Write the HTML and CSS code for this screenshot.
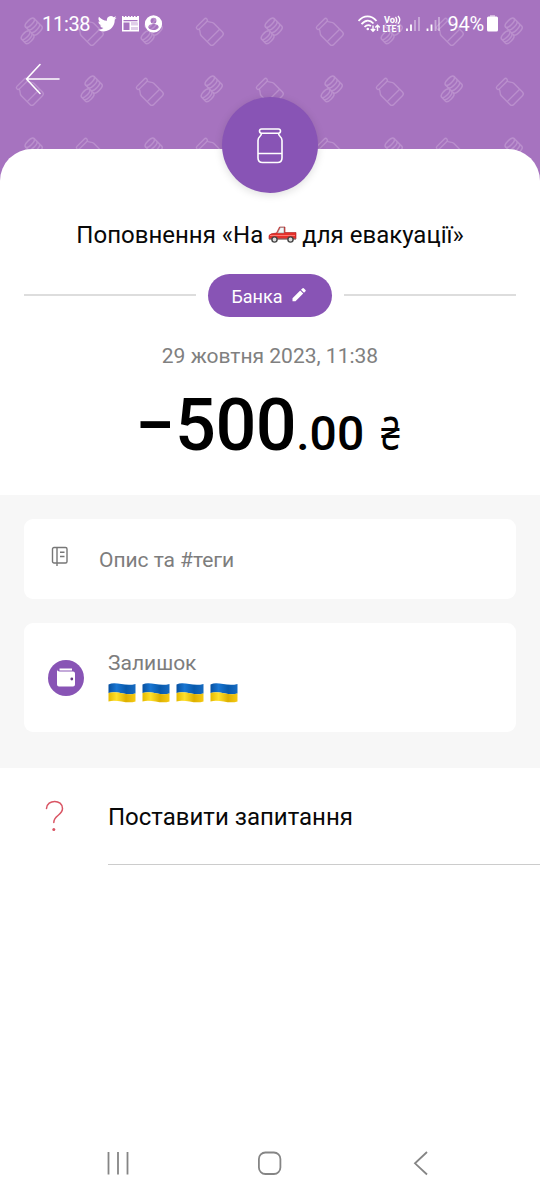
FILE: index.html
```html
<!DOCTYPE html>
<html lang="uk">
<head>
<meta charset="utf-8">
<title>Банка</title>
<link rel="stylesheet" href="styles.css">
</head>
<body>
<div class="screen">
  <header class="header">
    <svg class="header-pattern" width="540" height="190" fill="none" stroke="#ba8fcd" stroke-width="1.5" stroke-linejoin="round" stroke-linecap="round">
      <defs>
        <g id="jar" transform="rotate(-45) scale(.88)">
          <rect x="-8" y="-15" width="16" height="4" rx="2"/>
          <path d="M-6.500-11C-6.500-8-10-7.500-10-4V10Q-10 13-7 13H7Q10 13 10 10V-4C10-7.500 6.500-8 6.500-11M-10 5.500H10"/>
        </g>
        <g id="coins" transform="rotate(-45)">
          <ellipse cx="5" cy="-6" rx="6" ry="2.500"/>
          <path d="M-1-6V5C-1 8.300 11 8.300 11 5V-6M-1-2.300C-1 1 11 1 11-2.300M-1 1.400C-1 4.700 11 4.700 11 1.400"/>
          <path d="M-1.500-1C-4-3.500-12.500-3-12.500 0V5.500C-12.500 8.800-1.500 8.800-1 5.500M-12.500 0C-12.500 2.800-2.500 3-1.500 .5M-12.500 2.800C-12.500 6-2 6-1.200 3"/>
        </g>
        <pattern id="tile" width="120" height="120" patternUnits="userSpaceOnUse">
          <use href="#coins" x="30.500" y="30.500"/><use href="#jar" x="90" y="32"/>
          <use href="#jar" x="30" y="92"/><use href="#coins" x="90.500" y="88.500"/>
        </pattern>
      </defs>
      <rect width="540" height="190" fill="url(#tile)" stroke="none"/>
    </svg>
    <div class="status">
      <span class="clock">11:38</span>
      <svg class="notices" width="68" height="20" viewBox="0 0 68 20" fill="#fff">
        <path transform="translate(-.3 .2) scale(.79)" d="M23.950 4.570a10 10 0 0 1-2.820.77 4.960 4.960 0 0 0 2.160-2.720c-.95.55-2 .96-3.130 1.180a4.920 4.920 0 0 0-8.380 4.480C7.690 8.090 4.070 6.130 1.640 3.160a4.820 4.820 0 0 0-.67 2.480c0 1.710.87 3.210 2.190 4.100a4.900 4.900 0 0 1-2.230-.62v.06a4.920 4.920 0 0 0 3.950 4.830 5 5 0 0 1-2.210.08 4.940 4.940 0 0 0 4.600 3.420A9.870 9.870 0 0 1 0 19.540a13.990 13.990 0 0 0 7.550 2.210c9.050 0 14-7.500 14-13.990 0-.21 0-.42-.02-.63a9.940 9.940 0 0 0 2.460-2.550z"/>
        <path fill-rule="evenodd" d="M24 2H25.500v1h1.500V2h1.500v1H30V2h1.500v1H33V2h1.500v1H36V2h1.500v1H39V2h2v15.500H24zM25.500 6v1.300h14V6zM25.500 8.500V16h6V8.500zM33 8.500v3h6.500v-3zM33 13v3h6.500v-3z"/>
        <path opacity=".65" d="M33 8.500h6.500V16H33z"/>
        <path fill-rule="evenodd" d="M55.500 1.300a8.600 8.600 0 1 0 0 17.200 8.600 8.600 0 0 0 0-17.200zm0 2.400a3 3 0 1 1 0 6 3 3 0 0 1 0-6zm-5.300 9.700c0-4.500 10.600-4.500 10.600 0-2.300 3.500-8.300 3.500-10.600 0z"/>
      </svg>
      <span class="spacer"></span>
      <svg class="network" width="82" height="20" viewBox="0 0 82 20" fill="none" stroke="#fff" stroke-width="1.800">
        <path d="M.5 7C5.500.8 13.500.8 18.500 7M3.500 10.200C7.500 5.500 12 5.500 15.500 9.500M6.500 13Q9.500 9.800 13 12"/>
        <circle cx="9.800" cy="15" r="1.300" fill="#fff" stroke="none"/>
        <path stroke-width="1.400" d="M15 11.500V17M12.800 15L15 17.300 17.200 15M19.500 17V11.500M17.300 13.500L19.500 11.200 21.700 13.500"/>
        <text class="volte" x="26" y="9" textLength="11" lengthAdjust="spacingAndGlyphs">Vo</text><path stroke-width="1.300" d="M37.500 3Q40 6 37.500 9M40 2Q43.500 6 40 9.800"/>
        <text class="volte" x="24.500" y="18.300" textLength="19" lengthAdjust="spacingAndGlyphs">LTE1</text>
        <path d="M49 17V14.500M53 17V10.500M69.500 17V14.500M73.500 17V10.500"/><path opacity=".4" d="M57 17V6M61 17V3M77.500 17V6M81 17V3"/>
      </svg>
      <span class="percent">94%</span>
      <svg class="battery" width="11" height="17"><path fill="#d1b5dd" d="M3 3V0h5v3z"/><rect y="1.500" width="11" height="15" rx="1.500" fill="#fff"/></svg>
    </div>
    <svg class="back" width="36" height="32" fill="none" stroke="#fff" stroke-width="1.600" stroke-linecap="round" stroke-linejoin="round"><path d="M34 16H1.500M15 1.500L1.500 16 15 30.500"/></svg>
  </header>
  <main class="sheet">
    <div class="badge">
      <svg width="28" height="38" fill="none" stroke="#fff" stroke-width="1.600"><rect x="3.500" y="2" width="21" height="4.200" rx="2.100"/><path d="M5.500 6.300C5.500 10 2 9 2 13.500V31Q2 35.500 6.500 35.500H21.500Q26 35.500 26 31V13.500C26 9 22.500 10 22.500 6.300M2 26.500H26"/></svg>
    </div>
    <h1 class="title"><span>Поповнення «На</span>
      <svg class="truck" width="29" height="18" viewBox="0 0 29 18">
        <path fill="#e5302b" stroke="#a91a1c" stroke-width=".6" d="M1 9.500Q2 7.300 8.500 7L11.500 1H17V6.500H28V13H1z"/>
        <path fill="#f3f8f9" stroke="#888" stroke-width=".6" d="M9.500 7L12.300 1.500H16V7z"/><path stroke="#ff7770" d="M2 9.500H27"/><path stroke="#777" d="M1 13H28"/>
        <g fill="#ddd" stroke="#444" stroke-width="1.400"><circle cx="6.500" cy="13.500" r="2.600"/><circle cx="22.500" cy="13.500" r="2.600"/></g>
      </svg>
      <span>для евакуації»</span></h1>
    <div class="category">
      <span class="rule"></span>
      <div class="chip"><span>Банка</span><svg width="14" height="14" fill="#fff"><path d="M.5 10.300L8.200 2.600 11.200 5.600 3.500 13.300H.5zM9 1.800L10.600.3Q11.300-.2 12 .4L13.500 1.900Q14 2.600 13.500 3.200L12 4.800z"/></svg></div>
      <span class="rule"></span>
    </div>
    <p class="date">29 жовтня 2023, 11:38</p>
    <p class="amount"><span class="minus">–</span><span class="whole">500</span><span class="cents">.00</span><span class="currency">₴</span></p>
  </main>
  <section class="details">
    <div class="card note">
      <svg width="18" height="21" fill="none" stroke="#777" stroke-width="1.400"><rect x="1.500" y="1.500" width="14.500" height="15.500" rx="1.500"/><path d="M6 1.500V20M9 6.200H13.500M9 10.500H13.500"/></svg>
      <span>Опис та #теги</span>
    </div>
    <div class="card balance">
      <span class="wallet"><svg width="20" height="20"><path d="M3.500 .5H16V2.500H3.500zM1 1.500Q1 3.500 3.500 3.500H17Q19 3.500 19 5.500V16.500Q19 18.500 17 18.500H3Q1 18.500 1 16.500z" fill="#fff"/><circle cx="15.800" cy="11" r="1.400" fill="#643a83"/></svg></span>
      <div>
        <p class="label">Залишок</p>
        <div class="flags">
          <svg width="28" height="20" viewBox="0 0 28 20"><defs><linearGradient id="blue"><stop stop-color="#0750a0"/><stop offset=".3" stop-color="#1976d2"/><stop offset=".65" stop-color="#0759ac"/><stop offset="1" stop-color="#176bc1"/></linearGradient><linearGradient id="yellow"><stop stop-color="#e5b900"/><stop offset=".3" stop-color="#ffe02a"/><stop offset=".65" stop-color="#ddb000"/><stop offset="1" stop-color="#f6ca13"/></linearGradient><g id="flag"><path fill="url(#blue)" d="M.5 1.500C8-2 17 4 27.500 1V10.500C18 13 9 7 .5 10z"/><path fill="url(#yellow)" d="M.5 10C9 7 18 13 27.500 10.500V18.500C18 21.500 9 15.500 .5 18.500z"/></g></defs><use href="#flag"/></svg>
          <svg width="28" height="20"><use href="#flag"/></svg>
          <svg width="28" height="20"><use href="#flag"/></svg>
          <svg width="28" height="20"><use href="#flag"/></svg>
        </div>
      </div>
    </div>
  </section>
  <section class="question">
    <svg width="20" height="34" fill="none" stroke="#d95463" stroke-width="1.500" stroke-linecap="round"><path d="M1.500 8.500C2-1 17.500-1 17.500 8.500C17.500 15.500 8.800 15 8.800 22.500"/><circle cx="8.800" cy="29.500" r="1.500" fill="#d95463" stroke="none"/></svg>
    <span class="ask">Поставити запитання</span>
  </section>
  <nav class="nav">
    <svg width="24" height="26" fill="none" stroke="#858585" stroke-width="1.800"><path d="M2.500 2V24.500M12 2V24.500M21.500 2V24.500"/></svg>
    <svg width="24" height="26" fill="none" stroke="#858585" stroke-width="1.800"><rect x=".9" y="2.500" width="21.500" height="21.500" rx="6.500"/></svg>
    <svg width="24" height="26" fill="none" stroke="#858585" stroke-width="1.800"><path d="M18 2L6 13.300 18 24.500"/></svg>
  </nav>
</div>
</body>
</html>
```
FILE: styles.css
```css
* { box-sizing: border-box; }
body { margin: 0; font-family: Roboto, "Noto Sans", sans-serif; color: #080808; }
p, h1 { margin: 0; font-weight: 400; }
svg { display: block; flex: none; }
.screen { width: 540px; height: 1200px; background: #fff; display: flex; flex-direction: column; overflow: hidden; }
.header { position: relative; height: 190px; background: #a673bf; flex: none; }
.header-pattern { position: absolute; inset: 0; }
.status { position: relative; display: flex; height: 47px; padding: 0 42px; align-items: center; color: #fff; }
.clock { width: 50px; font-size: 20px; white-space: nowrap; letter-spacing: -.3px; }
.notices { margin-left: 6px; }
.spacer { flex: 1; }
.network { margin-right: 7px; }
.volte { font: 700 9.500px Roboto, sans-serif; fill: #fff; stroke: none; }
.percent { font-size: 20px; letter-spacing: -.2px; }
.battery { margin-left: 3px; }
.back { position: relative; margin: 16px 0 0 25px; }
.sheet { position: relative; flex: none; height: 346px; margin-top: -41px; background: #fff; border-radius: 32px 32px 0 0; display: flex; flex-direction: column; align-items: center; }
.badge { width: 96px; height: 96px; flex: none; margin-top: -52px; border-radius: 50%; background: #8854b5; display: flex; align-items: center; justify-content: center; padding-top: 2px; box-shadow: 0 2px 8px #0002; }
.title { display: flex; align-items: center; justify-content: center; height: 32px; margin-top: 26px; font-size: 24px; white-space: nowrap; }
.truck { margin: 0 5px; }
.category { width: 492px; margin-top: 23px; display: flex; align-items: center; gap: 12px; }
.rule { flex: 1; height: 2px; margin-bottom: 2px; background: #ddd; }
.chip { width: 124px; height: 43px; border-radius: 22px; background: #8854b5; color: #fff; display: flex; align-items: center; justify-content: center; gap: 9px; padding: 1px 3px 0 0; font-size: 18px; }
.chip svg { margin-bottom: 3px; }
.date { margin-top: 26px; font-size: 21px; line-height: 26px; color: #808080; }
.amount { display: flex; align-items: baseline; width: 268px; font-weight: 500; line-height: 84px; margin: 15px 0 0; color: #000; }
.minus, .whole { font-size: 72px; }
.minus { width: 39px; transform: scaleX(.82); transform-origin: left; }
.whole { letter-spacing: -.5px; }
.cents { font-size: 48px; }
.currency { font-size: 46px; margin-left: 17px; font-weight: 400; transform: scaleX(.74); transform-origin: left; }
.details { height: 273px; background: #f7f7f7; padding: 24px; display: flex; flex-direction: column; gap: 24px; flex: none; color: #7d7d7d; font-size: 21px; }
.card { background: #fff; border-radius: 9px; display: flex; }
.note { height: 80px; padding: 0 27px; gap: 30px; align-items: center; }
.note svg { margin-bottom: 6px; }
.note span { padding-top: 2px; letter-spacing: -.05px; }
.balance { height: 109px; padding: 0 24px; gap: 24px; align-items: center; }
.wallet { width: 36px; height: 36px; border-radius: 50%; background: #8854b5; display: grid; place-items: center; }
.label { line-height: 26px; margin-top: -2px; }
.flags { display: flex; gap: 6px; margin-top: 7px; }
.question { height: 97px; flex: none; padding-left: 45px; display: flex; gap: 43px; }
.question svg { margin-top: 32px; }
.ask { flex: 1; border-bottom: 1.500px solid #ccc; font-size: 24px; line-height: 99px; }
.nav { margin-top: auto; height: 75px; display: flex; justify-content: space-between; align-items: center; padding: 1px 107px 0 106px; }
```
